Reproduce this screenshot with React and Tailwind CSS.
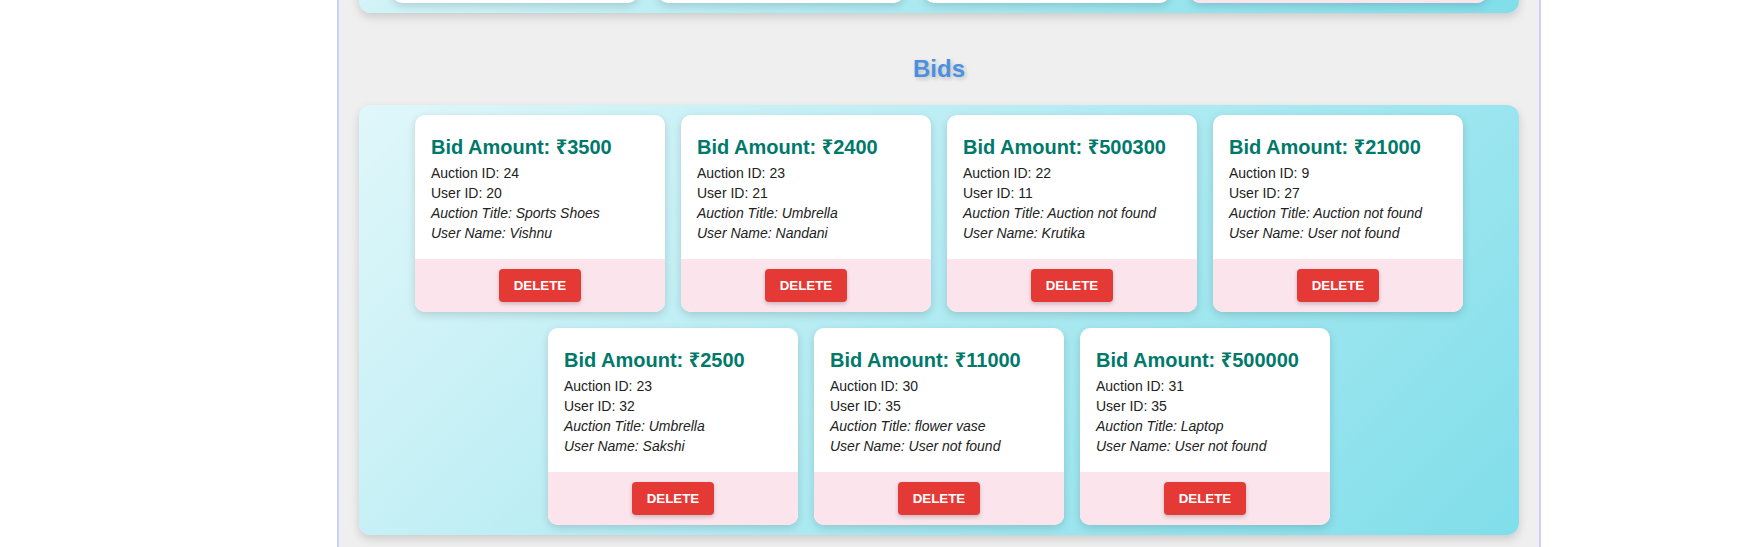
const bids = [
  { amount: 3500, auctionId: 24, userId: 20, title: "Sports Shoes", user: "Vishnu" },
  { amount: 2400, auctionId: 23, userId: 21, title: "Umbrella", user: "Nandani" },
  { amount: 500300, auctionId: 22, userId: 11, title: "Auction not found", user: "Krutika" },
  { amount: 21000, auctionId: 9, userId: 27, title: "Auction not found", user: "User not found" },
  { amount: 2500, auctionId: 23, userId: 32, title: "Umbrella", user: "Sakshi" },
  { amount: 11000, auctionId: 30, userId: 35, title: "flower vase", user: "User not found" },
  { amount: 500000, auctionId: 31, userId: 35, title: "Laptop", user: "User not found" },
];

function BidCard({ bid }) {
  return (
    <div className="w-[250px] bg-white rounded-[10px] overflow-hidden shadow-[0_3px_8px_rgba(0,0,0,0.15)] flex flex-col">
      <div className="px-4 pt-5 pb-4">
        <h3 className="text-[20px] leading-6 font-bold text-[#00796b]">Bid Amount: ₹{bid.amount}</h3>
        <div className="mt-1 text-[14px] leading-5 text-[#222]">
          <p>Auction ID: {bid.auctionId}</p>
          <p>User ID: {bid.userId}</p>
          <p className="italic">Auction Title: {bid.title}</p>
          <p className="italic">User Name: {bid.user}</p>
        </div>
      </div>
      <div className="bg-[#fce4ec] py-[10px] flex justify-center">
        <button className="bg-[#e53935] text-white font-bold text-[13.3px] h-[33px] px-[15px] rounded-[4px] shadow-[0_2px_4px_rgba(0,0,0,0.2)]">
          DELETE
        </button>
      </div>
    </div>
  );
}

function App() {
  return (
    <div className="min-h-screen bg-white flex" style={{ fontFamily: '"Liberation Sans", Arial, "Noto Sans", sans-serif' }}>
      <div className="w-[337px] shrink-0" />
      <div className="w-[1204px] shrink-0 min-h-screen bg-[#efefef] border-x-2 border-[#cdcdff] px-5 overflow-hidden">
        {/* previous section, scrolled mostly out of view */}
        <div className="-mt-[187px] rounded-[12px] bg-[linear-gradient(135deg,#e0f7fa,#80deea)] shadow-[0_4px_10px_rgba(0,0,0,0.15)] pt-[10px] pb-[10px] flex justify-center gap-5">
          <div className="w-[246px] h-[180px] bg-white rounded-[10px] shadow-[0_3px_8px_rgba(0,0,0,0.15)]" />
          <div className="w-[246px] h-[180px] bg-white rounded-[10px] shadow-[0_3px_8px_rgba(0,0,0,0.15)]" />
          <div className="w-[246px] h-[180px] bg-white rounded-[10px] shadow-[0_3px_8px_rgba(0,0,0,0.15)]" />
          <div className="w-[297px] h-[180px] bg-white rounded-[10px] overflow-hidden shadow-[0_3px_8px_rgba(0,0,0,0.15)] flex flex-col justify-end">
            <div className="h-[50px] bg-[#fce4ec]" />
          </div>
        </div>

        <h2 className="mt-[42px] mb-[22px] text-center text-[24px] leading-7 font-bold text-[#4a90e2] [text-shadow:2px_2px_4px_rgba(0,0,0,0.2)]">
          Bids
        </h2>

        <div className="rounded-[12px] bg-[linear-gradient(135deg,#e0f7fa,#80deea)] shadow-[0_4px_10px_rgba(0,0,0,0.15)] py-[10px] px-5 flex flex-wrap justify-center gap-4">
          {bids.map((b, i) => (
            <BidCard key={i} bid={b} />
          ))}
        </div>
      </div>
    </div>
  );
}

export default App;
